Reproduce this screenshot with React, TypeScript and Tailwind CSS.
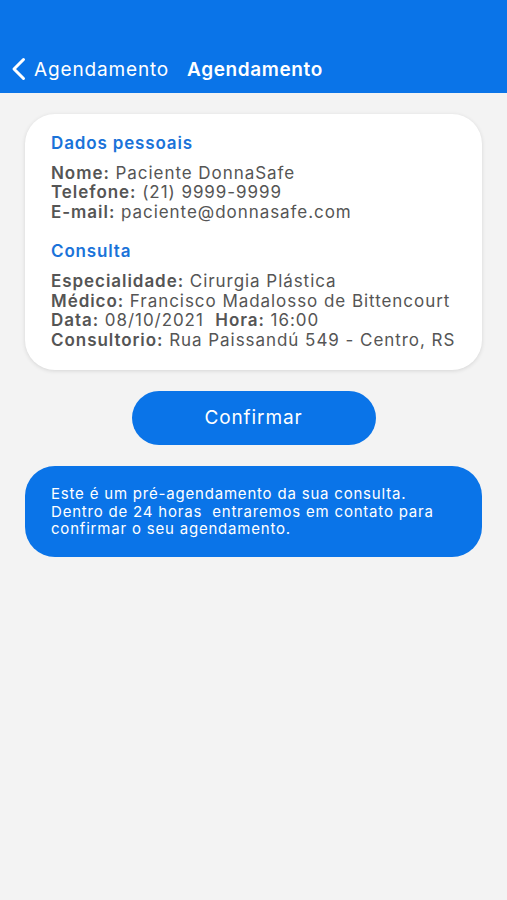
import React from 'react';

const Row: React.FC<{ label: string; value: string }> = ({ label, value }) => (
  <p>
    <span className="font-semibold">{label}:</span>
    {'\u00a0'}
    {value}
  </p>
);

const App: React.FC = () => {
  return (
    <div className="min-h-[900px] bg-[#f3f3f3] font-['Inter','Liberation_Sans',sans-serif] tracking-[0.85px]">
      <header className="h-[93px] bg-[#0a74e8] flex items-end pb-[12px]">
        <div className="flex items-center pl-[11px] text-white">
          <svg width="16" height="24" viewBox="0 0 16 24" fill="none" className="mr-[7px]">
            <path d="M12.5 2.5 L3 12 L12.5 21.5" stroke="white" strokeWidth="3" strokeLinecap="round" strokeLinejoin="round" />
          </svg>
          <span className="text-[19px] leading-none">Agendamento</span>
          <span className="text-[19px] leading-none font-semibold ml-[18px] tracking-[0.6px]">Agendamento</span>
        </div>
      </header>

      <main className="px-[25px] pt-[21px]">
        <div className="bg-white rounded-[30px] shadow-[0_1px_4px_rgba(0,0,0,0.12)] px-[26px] pt-[20px] pb-[20px] text-[#555555] text-[17px] leading-[19.6px] tracking-[0.95px]">
          <h2 className="text-[#1a73d9] font-semibold text-[17px] mb-[10px] tracking-[0.85px]">Dados pessoais</h2>
          <Row label="Nome" value="Paciente DonnaSafe" />
          <Row label="Telefone" value="(21) 9999-9999" />
          <Row label="E-mail" value="paciente@donnasafe.com" />
          <h2 className="text-[#1a73d9] font-semibold text-[17px] mt-[20px] mb-[10px] tracking-[0.85px]">Consulta</h2>
          <Row label="Especialidade" value="Cirurgia Plástica" />
          <Row label="Médico" value="Francisco Madalosso de Bittencourt" />
          <p>
            <span className="font-semibold">Data:</span>
            {'\u00a0'}08/10/2021{'\u00a0\u00a0'}
            <span className="font-semibold">Hora:</span>
            {'\u00a0'}16:00
          </p>
          <Row label="Consultorio" value="Rua Paissandú 549 - Centro, RS" />
        </div>

        <div className="flex justify-center mt-[21px]">
          <button className="w-[244px] h-[54px] rounded-full bg-[#0a74e8] text-white text-[19px] tracking-[0.9px]">
            Confirmar
          </button>
        </div>

        <div className="mt-[21px] bg-[#0a74e8] rounded-[30px] px-[26px] pt-[19px] pb-[19px] text-white text-[15px] leading-[17.5px] tracking-[0.8px]">
          <p>Este é um pré-agendamento da sua consulta.</p>
          <p className="whitespace-pre">Dentro de 24 horas  entraremos em contato para</p>
          <p>confirmar o seu agendamento.</p>
        </div>
      </main>
    </div>
  );
};

export default App;
